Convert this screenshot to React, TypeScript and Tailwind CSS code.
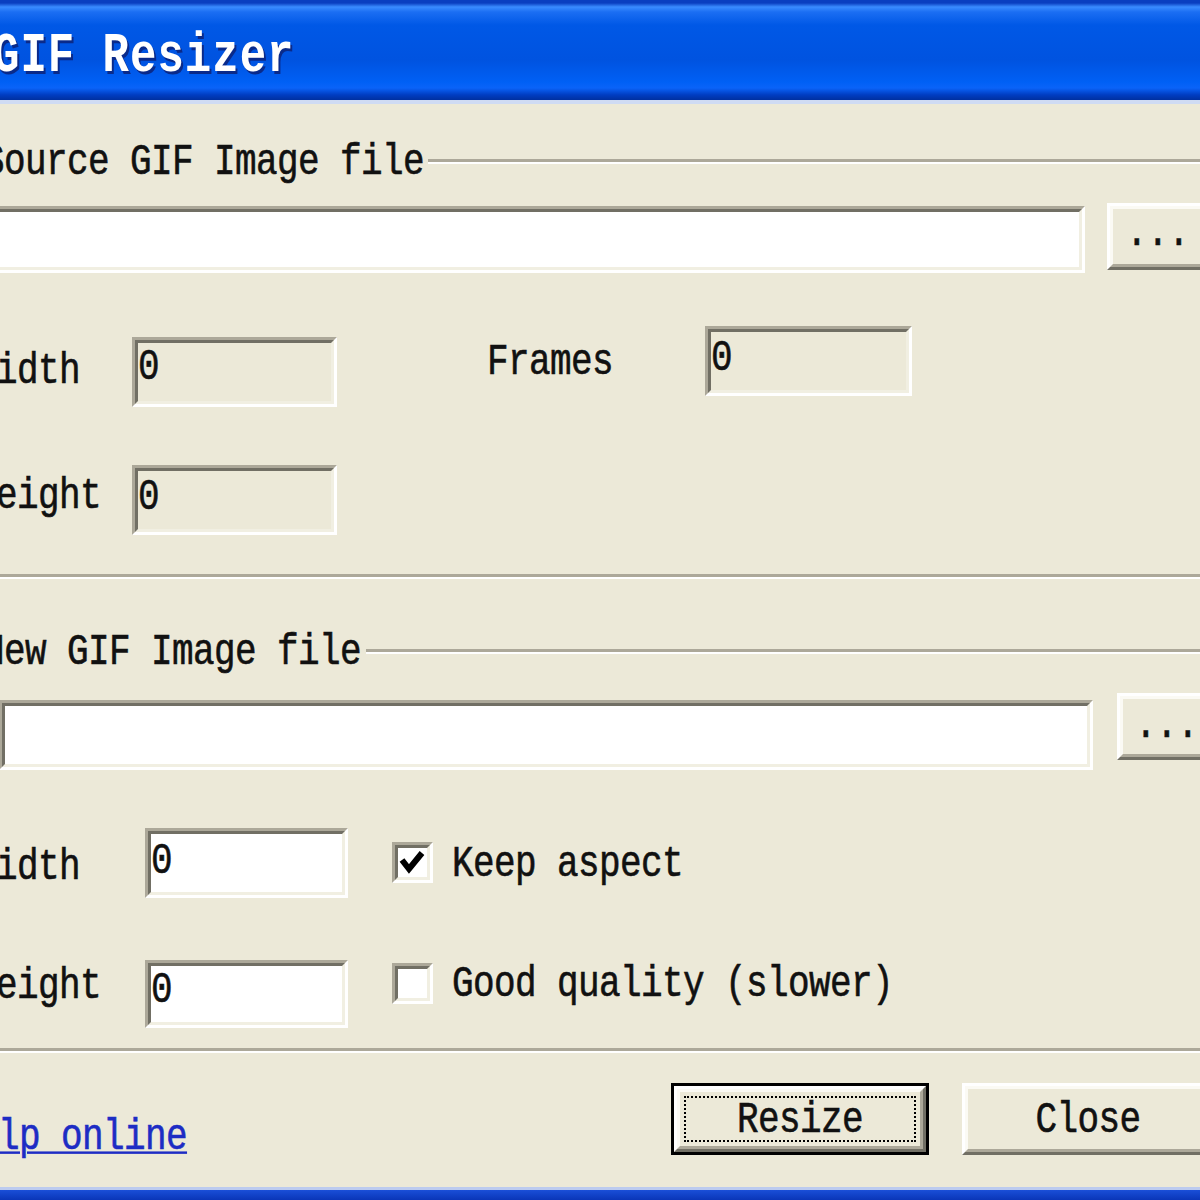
import React from "react";

type P = { children?: React.ReactNode; className?: string };

function T({ children, className = "text-[#111]" }: P) {
  return (
    <span
      className={`inline-block whitespace-pre font-['Liberation_Mono','Courier_New',monospace] text-[36px] leading-[36px] tracking-[-0.6px] scale-y-[1.22] translate-y-[2px] [-webkit-text-stroke:0.5px_currentColor] ${className}`}
    >
      {children}
    </span>
  );
}

function Sunken({ className = "", inner = "bg-white", children }: P & { inner?: string }) {
  return (
    <div
      className={`shrink-0 border-[3px] border-t-[#aca899] border-l-[#aca899] border-b-white border-r-white ${className}`}
    >
      <div
        className={`h-full w-full border-[3px] border-t-[#716f64] border-l-[#716f64] border-b-[#f1efe2] border-r-[#f1efe2] ${inner}`}
      >
        {children}
      </div>
    </div>
  );
}

function Raised({ className = "", inner = "", children }: P & { inner?: string }) {
  return (
    <div
      className={`shrink-0 border-[3px] border-t-white border-l-white border-b-[#716f64] border-r-[#716f64] ${className}`}
    >
      <div
        className={`h-full w-full border-[3px] border-t-[#fbfaf4] border-l-[#fbfaf4] border-b-[#aca899] border-r-[#aca899] bg-[#ece9d8] ${inner}`}
      >
        {children}
      </div>
    </div>
  );
}

function Check({ checked, className = "" }: { checked?: boolean; className?: string }) {
  return (
    <div
      className={`shrink-0 w-[41px] h-[41px] border-[3px] border-t-[#aca899] border-l-[#aca899] border-b-white border-r-white ${className}`}
    >
      <div className="h-full w-full border-[3px] border-t-[#716f64] border-l-[#716f64] border-b-[#f1efe2] border-r-[#f1efe2] bg-white">
        {checked && (
          <svg width="29" height="29" viewBox="0 0 29 29" className="block">
            <polyline
              points="4,12 11,21 24,5"
              fill="none"
              stroke="#000"
              strokeWidth="6"
              strokeLinejoin="miter"
            />
          </svg>
        )}
      </div>
    </div>
  );
}

function Sep() {
  return (
    <div className="flex flex-col">
      <div className="h-[3px] bg-[#aca899]" />
      <div className="h-[2px] bg-white" />
    </div>
  );
}

export default function App() {
  return (
    <div className="w-[1200px] h-[1200px] overflow-hidden bg-[#ece9d8] flex flex-col">
      {/* Title bar */}
      <div className="h-[100px] shrink-0 pt-[34px] bg-[linear-gradient(180deg,#0a3fc0_0px,#0a3fc0_3px,#3a8cff_7px,#1b6ef3_12px,#0058e6_25px,#0053e0_60px,#0060f5_82px,#0a63f8_88px,#003cc0_95px,#0030a0_100px)]">
        <span className="inline-block whitespace-pre -ml-[7px] font-['Liberation_Mono','Courier_New',monospace] font-bold text-[44px] leading-[44px] tracking-[1px] scale-y-[1.25] text-white [text-shadow:2px_2px_0_#0a2a8a]">
          GIF Resizer
        </span>
      </div>
      <div className="h-[4px] shrink-0 bg-[#cfdbf3]" />

      {/* Body */}
      <div className="flex flex-col flex-1">
        {/* Source group header */}
        <div className="mt-[39px] h-[36px] flex items-center -ml-[17px]">
          <T>Source GIF Image file</T>
          <div className="flex-1 ml-[4px]">
            <Sep />
          </div>
        </div>

        {/* Source path row */}
        <div className="mt-[24px] flex items-start">
          <Sunken className="-ml-[10px] mt-[3px] w-[1095px] h-[67px]" />
          <Raised className="ml-[22px] w-[110px] h-[67px]" inner="pl-[13px] pt-[5px]">
            <T>...</T>
          </Raised>
        </div>

        {/* Width / Frames */}
        <div className="mt-[53px] flex items-start -ml-[25px]">
          <div className="w-[157px] mt-[26px] shrink-0">
            <T>Width</T>
          </div>
          <Sunken className="w-[205px] h-[70px] mt-[11px]" inner="bg-[#ece9d8] pt-[5px]">
            <T>0</T>
          </Sunken>
          <div className="ml-[150px] w-[218px] mt-[17px] shrink-0">
            <T>Frames</T>
          </div>
          <Sunken className="w-[207px] h-[70px]" inner="bg-[#ece9d8] pt-[7px]">
            <T>0</T>
          </Sunken>
        </div>

        {/* Height */}
        <div className="mt-[58px] flex items-start -ml-[25px]">
          <div className="w-[157px] mt-[12px] shrink-0">
            <T>Height</T>
          </div>
          <Sunken className="w-[205px] h-[70px]" inner="bg-[#ece9d8] pt-[7px]">
            <T>0</T>
          </Sunken>
        </div>

        <div className="mt-[39px]">
          <Sep />
        </div>

        {/* New group header */}
        <div className="mt-[54px] h-[36px] flex items-center -ml-[17px]">
          <T>New GIF Image file</T>
          <div className="flex-1 ml-[5px]">
            <Sep />
          </div>
        </div>

        {/* New path row */}
        <div className="mt-[24px] flex items-start">
          <Sunken className="-ml-[1px] mt-[7px] w-[1094px] h-[70px]" />
          <Raised className="ml-[24px] w-[100px] h-[67px]" inner="pl-[12px] pt-[7px]">
            <T>...</T>
          </Raised>
        </div>

        {/* New width */}
        <div className="mt-[58px] flex items-start -ml-[25px]">
          <div className="w-[170px] mt-[20px] shrink-0">
            <T>Width</T>
          </div>
          <Sunken className="w-[203px] h-[70px]" inner="bg-white pt-[8px]">
            <T>0</T>
          </Sunken>
          <Check checked className="ml-[44px] mt-[14px]" />
          <div className="ml-[19px] mt-[17px]">
            <T>Keep aspect</T>
          </div>
        </div>

        {/* New height */}
        <div className="mt-[62px] flex items-start -ml-[25px]">
          <div className="w-[170px] mt-[7px] shrink-0">
            <T>Height</T>
          </div>
          <Sunken className="w-[203px] h-[68px]" inner="bg-white pt-[5px]">
            <T>0</T>
          </Sunken>
          <Check className="ml-[44px] mt-[3px]" />
          <div className="ml-[19px] mt-[5px]">
            <T>Good quality (slower)</T>
          </div>
        </div>

        <div className="mt-[20px]">
          <Sep />
        </div>

        {/* Bottom row */}
        <div className="mt-[30px] flex items-start">
          <div className="-ml-[44px] mt-[35px] shrink-0">
            <T className="text-[#1d2cc4] underline decoration-[2px] underline-offset-[2px]">Help online</T>
          </div>
          <div className="ml-[484px] w-[258px] h-[72px] border-[3px] border-black shrink-0">
            <Raised className="w-full h-full" inner="p-[4px]">
              <div className="h-full w-full border-2 border-dotted border-black flex items-center justify-center">
                <T>Resize</T>
              </div>
            </Raised>
          </div>
          <Raised className="ml-[33px] w-[252px] h-[72px]" inner="flex items-center justify-center">
            <T>Close</T>
          </Raised>
        </div>
      </div>

      {/* Bottom window frame */}
      <div className="h-[3px] shrink-0 bg-[#bccbef]" />
      <div className="h-[10px] shrink-0 bg-[linear-gradient(180deg,#1a4fd8,#0a36b8)]" />
    </div>
  );
}
